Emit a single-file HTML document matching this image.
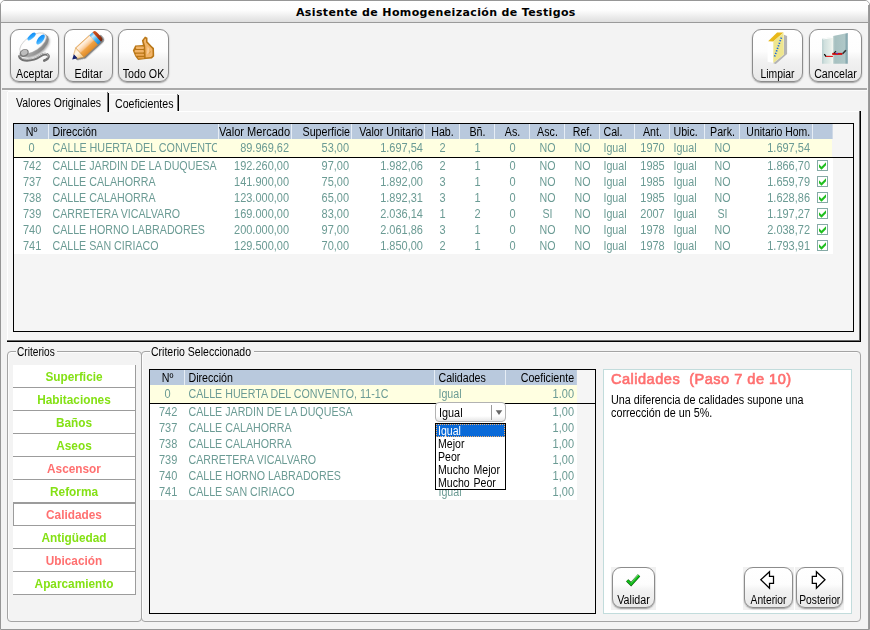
<!DOCTYPE html>
<html lang="es"><head><meta charset="utf-8"><title>Asistente de Homogeneización de Testigos</title>
<style>
html,body{margin:0;padding:0}
body{width:870px;height:630px;position:relative;overflow:hidden;background:#fff;font-family:"Liberation Sans",sans-serif;font-size:12.5px;color:#000}
.a{position:absolute}
.t{position:absolute;white-space:pre;line-height:14px;height:14px;font-size:12.5px;transform:scaleX(.854);transform-origin:0 0}
.tc{transform-origin:50% 0;text-align:center}
.btn{position:absolute;box-sizing:border-box;border:1px solid #8c8c8c;border-radius:9px;background:linear-gradient(#ffffff 0%,#fdfdfd 42%,#f2f2f2 58%,#e8e8e8 100%);box-shadow:0 1px 1.5px rgba(0,0,0,.35)}
.hc{position:absolute;height:15px;background:#b9c9dd;overflow:hidden;white-space:pre;line-height:17px;box-sizing:border-box;transform-origin:0 0}
.c{position:absolute;height:16px;overflow:hidden;white-space:pre;line-height:16px;color:#6b9b94;box-sizing:border-box;transform-origin:0 0}
.crit{position:absolute;left:13px;width:122px;height:22px;background:#fff;border-right:1px solid #9c9c9c;border-bottom:1px solid #9c9c9c}
.crit span{position:absolute;left:0;width:122px;top:5px;line-height:14px;text-align:center;font-weight:bold;transform:scaleX(.945);white-space:pre}
.gr{color:#84e114}.rd{color:#ff7070}
</style></head><body>

<div class="a" style="left:0;top:0;width:868px;height:628px;border:1px solid #969696;border-radius:5px 5px 0 0;background:#f3f3f3"></div>
<div class="a" style="left:1px;top:1px;width:868px;height:21px;border-radius:4px 4px 0 0;background:linear-gradient(#ffffff 0%,#fdfdfd 45%,#dedede 100%)"></div>
<div class="a" style="left:1px;top:22px;width:868px;height:1px;background:#9a9a9a"></div>
<div class="a" style="left:868px;top:5px;width:1px;height:624px;background:#9c9c9c"></div>
<div class="a" style="left:296px;top:6px;white-space:pre;font-family:'DejaVu Sans','Liberation Sans',sans-serif;font-weight:bold;font-size:11px;letter-spacing:0.36px;line-height:14px;height:14px">Asistente de Homogeneización de Testigos</div>
<div class="btn" style="left:10px;top:29px;width:49px;height:53px"></div>
<svg class="a" style="left:10px;top:29px" width="49" height="53" viewBox="0 0 49 53">
<defs>
<radialGradient id="mb" cx="38%" cy="35%" r="80%"><stop offset="0" stop-color="#ffffff"/><stop offset=".7" stop-color="#fbfbfb"/><stop offset="1" stop-color="#d4d4d4"/></radialGradient>
<linearGradient id="ms" x1="0" y1="0" x2="1" y2="1"><stop offset="0" stop-color="#d0d0d0"/><stop offset=".6" stop-color="#9a9a9a"/><stop offset="1" stop-color="#7a7a7a"/></linearGradient>
<linearGradient id="mbl" x1="1" y1="0" x2="0" y2="1"><stop offset="0" stop-color="#0a84f0"/><stop offset=".55" stop-color="#2aa4ff"/><stop offset="1" stop-color="#8ad8ff"/></linearGradient>
<filter id="mf" x="-20%" y="-20%" width="140%" height="140%"><feGaussianBlur stdDeviation="0.8"/></filter>
</defs>
<g filter="url(#mf)" opacity=".6"><ellipse cx="25.8" cy="17.6" rx="15.5" ry="8.4" transform="rotate(-34 25.8 17.6)" fill="#666"/></g>
<path d="M9.4 27.2 C10.5 32 18 31.9 24 30.2 C29 28.8 31.5 25.2 35 25.2 C38.6 25.2 39.6 27.6 37.6 29.6 C36.6 30.6 35.4 31.2 34.3 31.6" fill="none" stroke="#727272" stroke-width="2.7" stroke-linecap="round"/>
<path d="M9.8 26.8 C11.5 31 18 30.8 24 29.2 C29 27.8 31.5 24.3 35 24.3 C38 24.4 38.8 26.6 37.4 28.4" fill="none" stroke="#cfcfcf" stroke-width="1" stroke-linecap="round"/>
<ellipse cx="24.3" cy="16.2" rx="16.2" ry="8.7" transform="rotate(-34 24.3 16.2)" fill="url(#ms)"/>
<ellipse cx="23.1" cy="14.4" rx="15.3" ry="7.5" transform="rotate(-34 23.1 14.4)" fill="url(#mb)" stroke="#a8a8a8" stroke-width=".45"/>
<ellipse cx="21.6" cy="7.5" rx="5.2" ry="2.2" transform="rotate(-43 21.6 7.5)" fill="url(#mbl)"/>
<ellipse cx="30.6" cy="10.5" rx="6" ry="2.7" transform="rotate(-52 30.6 10.5)" fill="url(#mbl)"/>
<ellipse cx="14.2" cy="24" rx="4.8" ry="3.8" transform="rotate(-30 14.2 24)" fill="#7c7c7c"/>
<ellipse cx="14.3" cy="23.6" rx="3.4" ry="2.6" transform="rotate(-30 14.3 23.6)" fill="#bdbdbd"/>
</svg>
<div class="t tc" style="left:10px;width:49px;top:67px;transform:scaleX(0.854);">Aceptar</div>
<div class="btn" style="left:64px;top:29px;width:49px;height:53px"></div>
<svg class="a" style="left:64px;top:29px" width="49" height="53" viewBox="0 0 49 53">
<defs>
<linearGradient id="pb" x1="0" y1="0" x2="0" y2="1"><stop offset="0" stop-color="#f4b46c"/><stop offset=".1" stop-color="#fff2e4"/><stop offset=".3" stop-color="#fde0c0"/><stop offset=".5" stop-color="#f8c48c"/><stop offset=".6" stop-color="#f0a446"/><stop offset="1" stop-color="#e08a26"/></linearGradient>
<linearGradient id="pw" x1="0" y1="0" x2="0" y2="1"><stop offset="0" stop-color="#ffe2b8"/><stop offset=".4" stop-color="#fff6e6"/><stop offset="1" stop-color="#f4c070"/></linearGradient>
<linearGradient id="pbl" x1="0" y1="0" x2="0" y2="1"><stop offset="0" stop-color="#3aa8f0"/><stop offset=".25" stop-color="#c8ecff"/><stop offset=".6" stop-color="#44b4f4"/><stop offset="1" stop-color="#1a88d8"/></linearGradient>
<linearGradient id="pe" x1="0" y1="0" x2="0" y2="1"><stop offset="0" stop-color="#d05820"/><stop offset=".5" stop-color="#b03c14"/><stop offset="1" stop-color="#6c2410"/></linearGradient>
<filter id="pf" x="-20%" y="-40%" width="140%" height="180%"><feGaussianBlur stdDeviation="0.7"/></filter>
</defs>
<g transform="translate(8.2 30.5) rotate(-42.5)">
<path d="M3 3.8 L10.5 8.2 L34 8.2 Q37.8 8.2 37.8 3.4 L37.8 1 L3 1 Z" fill="#505050" opacity=".7" filter="url(#pf)"/>
<path d="M4.4 -2.6 L10.5 -6.3 L10.5 6.3 L4.4 2.6 Z" fill="url(#pw)" stroke="#d89840" stroke-width=".5"/>
<path d="M0 0 L4.8 -2.8 L4.8 2.8 Z" fill="#14226e"/>
<rect x="10.5" y="-6.3" width="18.6" height="12.6" fill="url(#pb)" stroke="#d08a30" stroke-width=".5"/>
<rect x="29.1" y="-6.3" width="4.2" height="12.6" fill="url(#pbl)"/>
<path d="M33.3 -6.3 L34.2 -6.3 Q36.6 -6.3 36.6 -2.8 L36.6 2.8 Q36.6 6.3 34.2 6.3 L33.3 6.3 Z" fill="url(#pe)"/>
</g>
</svg>
<div class="t tc" style="left:64px;width:49px;top:67px;transform:scaleX(0.854);">Editar</div>
<div class="btn" style="left:118px;top:29px;width:51px;height:53px"></div>
<svg class="a" style="left:118px;top:29px" width="51" height="53" viewBox="0 0 51 53">
<path d="M27 7.4 L29.5 8.7 L29.5 12.5 L33.9 17.2 L36 19.1 L36.2 27.2 L33.9 29.6 L28 30.1 L20.1 31 L17.2 27.3 L14.8 21.6 L17.2 16.4 L24.9 15.9 L23.9 11.6 Z" fill="#b87616"/>
<path d="M27 9.4 L28 9.9 L28 13.2 L32.5 18 L34.4 19.9 L34.6 26.4 L33 28 L27.7 28.5 L27.2 17 L25.6 11.9 Z" fill="#f2b468"/>
<path d="M29.6 17.6 L31.2 19.8 L30.8 23.6 L28.8 25.6 Z" fill="#f9cc94"/>
<path d="M31.2 24.2 L32.8 22.6" stroke="#c88a2c" stroke-width=".8"/>
<rect x="17.9" y="17.6" width="8" height="2.3" rx=".9" fill="#f2b468"/>
<rect x="16.6" y="21.1" width="9.3" height="2.4" rx=".9" fill="#f2b468"/>
<rect x="17.6" y="24.7" width="8.4" height="2.1" rx=".9" fill="#eeaa58"/>
<rect x="19.8" y="27.9" width="6.4" height="1.6" rx=".7" fill="#e6a048"/>
</svg>
<div class="t tc" style="left:118px;width:51px;top:67px;transform:scaleX(0.854);">Todo OK</div>
<div class="btn" style="left:752px;top:29px;width:51px;height:53px"></div>
<svg class="a" style="left:752px;top:29px" width="51" height="53" viewBox="0 0 51 53">
<path d="M31.9 5.7 L35.1 7 L35.1 25.1 L23.8 35.1 L21.3 34.2 L31.9 25.6 Z" fill="#b4b4b4"/>
<path d="M15.6 12.5 L21.3 12.5 L21.3 33.7 L15.6 32.8 Z" fill="#ffffff"/>
<path d="M16.1 12.2 L25.1 3.4 L31.5 3.4 L21.3 12.6 Z" fill="#e8b818"/>
<path d="M21.3 12.6 L31.5 3.4 L31.9 25.6 L21.3 33.9 Z" fill="#efe68e"/>
<path d="M29.4 8.6 L22.6 27.6" fill="none" stroke="#1466e2" stroke-width="1.7" stroke-dasharray="1.25 1.45"/>
</svg>
<div class="t tc" style="left:752.4px;width:51px;top:67px;transform:scaleX(0.83);">Limpiar</div>
<div class="btn" style="left:809px;top:29px;width:53px;height:53px"></div>
<svg class="a" style="left:809px;top:29px" width="53" height="53" viewBox="0 0 53 53">
<defs>
<linearGradient id="dl" x1="0" y1="0" x2="1" y2="0"><stop offset="0" stop-color="#b4cccc"/><stop offset=".2" stop-color="#cfdfdd"/><stop offset=".7" stop-color="#e2ece8"/><stop offset="1" stop-color="#f4f7f1"/></linearGradient>
<linearGradient id="dr" x1="0" y1="0" x2="1" y2="0"><stop offset="0" stop-color="#c4d6d4"/><stop offset=".12" stop-color="#a6c0c0"/><stop offset=".82" stop-color="#b0c8c8"/><stop offset=".86" stop-color="#8cacb2"/><stop offset="1" stop-color="#86a8b0"/></linearGradient>
</defs>
<path d="M13.1 9.8 L24.1 7.8 L24.1 34.7 L13.1 34.7 Z" fill="url(#dl)"/>
<path d="M14 10.6 L24.1 8.7 L24.1 7.8 L13.6 9.7 Z" fill="#ffffff"/>
<path d="M24.1 7 L38.8 3.9 L38.8 34.7 L24.1 34.7 Z" fill="url(#dr)"/>
<path d="M16.5 27.4 L23.9 27.4" stroke="#e41414" stroke-width="1.1"/>
<path d="M23.2 24.9 L33.4 24.9" stroke="#d01010" stroke-width="2"/>
<path d="M15.3 25.2 L16.9 27.4" stroke="#000" stroke-width="1.2"/>
<path d="M25 24.2 L27 22.2" stroke="#222" stroke-width="1.2"/>
<path d="M33.6 24.8 L36.9 21.2" stroke="#333" stroke-width="1.6"/>
<rect x="27.2" y="23.9" width="1.6" height="1" fill="#5030e0"/>
</svg>
<div class="t tc" style="left:809px;width:53px;top:67px;transform:scaleX(0.854);">Cancelar</div>
<div class="a" style="left:2px;top:88px;width:865px;height:2px;background:#a9a9a9"></div>
<div class="a" style="left:3px;top:90px;width:864px;height:1px;background:#fbfbfb"></div>
<div class="a" style="left:7px;top:111px;width:852px;height:229px;background:#f5f5f5"></div>
<div class="a" style="left:7px;top:92px;width:100px;height:20px;background:#f5f5f5"></div>
<div class="a" style="left:8px;top:91px;width:99px;height:1px;background:#fff"></div>
<div class="a" style="left:7px;top:92px;width:1px;height:248px;background:#fff"></div>
<div class="a" style="left:109px;top:111px;width:750px;height:1px;background:#fff"></div>
<div class="a" style="left:110px;top:94px;width:67px;height:17px;background:#f6f6f6;border-top:1px solid #fdfdfd"></div>
<div class="a" style="left:859px;top:111px;width:1px;height:230px;background:#6a6a6a"></div>
<div class="a" style="left:7px;top:340px;width:853px;height:1px;background:#6a6a6a"></div>
<div class="a" style="left:860px;top:111px;width:1px;height:231px;background:#000"></div>
<div class="a" style="left:7px;top:341px;width:854px;height:1px;background:#000"></div>
<div class="a" style="left:107px;top:92px;width:1px;height:20px;background:#7a7a7a"></div>
<div class="a" style="left:108px;top:93px;width:1px;height:19px;background:#000"></div>
<div class="a" style="left:177px;top:94px;width:1px;height:17px;background:#7a7a7a"></div>
<div class="a" style="left:178px;top:95px;width:1px;height:16px;background:#000"></div>
<div class="t " style="left:16px;top:96px;transform:scaleX(0.84);">Valores Originales</div>
<div class="t " style="left:115px;top:97px;transform:scaleX(0.85);">Coeficientes</div>
<div class="a" style="left:13px;top:123px;width:839px;height:207px;border:1px solid #000;background:#f5f5f5;box-sizing:content-box"></div>
<div class="hc" style="left:14px;top:124px;width:40.98px;text-align:center;transform:scaleX(0.854);">Nº</div>
<div class="hc" style="left:49px;top:124px;width:199.06px;padding-left:4px;text-align:left;transform:scaleX(0.854);">Dirección</div>
<div class="hc" style="left:219px;top:124px;width:82.49px;padding-right:2.3px;text-align:right;transform:scaleX(0.885);">Valor Mercado</div>
<div class="hc" style="left:292px;top:124px;width:70.26px;padding-right:2.3px;text-align:right;transform:scaleX(0.854);">Superficie</div>
<div class="hc" style="left:352px;top:124px;width:85.48px;padding-right:2.3px;text-align:right;transform:scaleX(0.854);">Valor Unitario</div>
<div class="hc" style="left:425px;top:124px;width:40.98px;text-align:center;transform:scaleX(0.854);">Hab.</div>
<div class="hc" style="left:460px;top:124px;width:40.98px;text-align:center;transform:scaleX(0.854);">Bñ.</div>
<div class="hc" style="left:495px;top:124px;width:40.98px;text-align:center;transform:scaleX(0.854);">As.</div>
<div class="hc" style="left:530px;top:124px;width:40.98px;text-align:center;transform:scaleX(0.854);">Asc.</div>
<div class="hc" style="left:565px;top:124px;width:40.98px;text-align:center;transform:scaleX(0.854);">Ref.</div>
<div class="hc" style="left:600px;top:124px;width:40.98px;padding-left:4px;text-align:left;transform:scaleX(0.854);">Cal.</div>
<div class="hc" style="left:635px;top:124px;width:40.98px;text-align:center;transform:scaleX(0.854);">Ant.</div>
<div class="hc" style="left:670px;top:124px;width:40.98px;padding-left:4px;text-align:left;transform:scaleX(0.854);">Ubic.</div>
<div class="hc" style="left:705px;top:124px;width:40.98px;text-align:center;transform:scaleX(0.854);">Park.</div>
<div class="hc" style="left:740px;top:124px;width:87.43px;padding-right:3.4px;text-align:right;transform:scaleX(0.835);">Unitario Hom.</div>
<div class="hc" style="left:813px;top:124px;width:23.42px;text-align:center;transform:scaleX(0.854);"></div>
<div class="a" style="left:48px;top:124px;width:1px;height:15px;background:#e6edf5"></div>
<div class="a" style="left:218px;top:124px;width:1px;height:15px;background:#e6edf5"></div>
<div class="a" style="left:291px;top:124px;width:1px;height:15px;background:#e6edf5"></div>
<div class="a" style="left:351px;top:124px;width:1px;height:15px;background:#e6edf5"></div>
<div class="a" style="left:424px;top:124px;width:1px;height:15px;background:#e6edf5"></div>
<div class="a" style="left:459px;top:124px;width:1px;height:15px;background:#e6edf5"></div>
<div class="a" style="left:494px;top:124px;width:1px;height:15px;background:#e6edf5"></div>
<div class="a" style="left:529px;top:124px;width:1px;height:15px;background:#e6edf5"></div>
<div class="a" style="left:564px;top:124px;width:1px;height:15px;background:#e6edf5"></div>
<div class="a" style="left:599px;top:124px;width:1px;height:15px;background:#e6edf5"></div>
<div class="a" style="left:634px;top:124px;width:1px;height:15px;background:#e6edf5"></div>
<div class="a" style="left:669px;top:124px;width:1px;height:15px;background:#e6edf5"></div>
<div class="a" style="left:704px;top:124px;width:1px;height:15px;background:#e6edf5"></div>
<div class="a" style="left:739px;top:124px;width:1px;height:15px;background:#e6edf5"></div>
<div class="a" style="left:812px;top:124px;width:1px;height:15px;background:#e6edf5"></div>
<div class="a" style="left:14px;top:139px;width:818px;height:18px;background:#ffffe1"></div>
<div class="a" style="left:14px;top:157px;width:839px;height:1px;background:#000"></div>
<div class="a" style="left:14px;top:158px;width:819px;height:96px;background:#fff"></div>
<div class="c" style="left:14px;top:140px;width:39.82px;text-align:center;transform:scaleX(0.879);">0</div>
<div class="c" style="left:49px;top:140px;width:194.90px;padding-left:4px;text-align:left;transform:scaleX(0.862);">CALLE HUERTA DEL CONVENTO, 11-1C</div>
<div class="c" style="left:219px;top:140px;width:83.05px;padding-right:3.4px;text-align:right;transform:scaleX(0.879);">89.969,62</div>
<div class="c" style="left:292px;top:140px;width:68.26px;padding-right:3.4px;text-align:right;transform:scaleX(0.879);">53,00</div>
<div class="c" style="left:352px;top:140px;width:83.05px;padding-right:2.3px;text-align:right;transform:scaleX(0.879);">1.697,54</div>
<div class="c" style="left:425px;top:140px;width:39.82px;text-align:center;transform:scaleX(0.879);">2</div>
<div class="c" style="left:460px;top:140px;width:39.82px;text-align:center;transform:scaleX(0.879);">1</div>
<div class="c" style="left:495px;top:140px;width:39.82px;text-align:center;transform:scaleX(0.879);">0</div>
<div class="c" style="left:530px;top:140px;width:40.98px;text-align:center;transform:scaleX(0.854);">NO</div>
<div class="c" style="left:565px;top:140px;width:40.98px;text-align:center;transform:scaleX(0.854);">NO</div>
<div class="c" style="left:600px;top:140px;width:40.98px;padding-left:4px;text-align:left;transform:scaleX(0.854);">Igual</div>
<div class="c" style="left:635px;top:140px;width:39.82px;text-align:center;transform:scaleX(0.879);">1970</div>
<div class="c" style="left:670px;top:140px;width:40.98px;padding-left:4px;text-align:left;transform:scaleX(0.854);">Igual</div>
<div class="c" style="left:705px;top:140px;width:40.98px;text-align:center;transform:scaleX(0.854);">NO</div>
<div class="c" style="left:740px;top:140px;width:83.05px;padding-right:3.4px;text-align:right;transform:scaleX(0.879);">1.697,54</div>
<div class="c" style="left:14px;top:158px;width:39.82px;text-align:center;transform:scaleX(0.879);padding-left:1.4px;">742</div>
<div class="c" style="left:49px;top:158px;width:196.72px;padding-left:4px;text-align:left;transform:scaleX(0.854);">CALLE JARDIN DE LA DUQUESA</div>
<div class="c" style="left:219px;top:158px;width:83.05px;padding-right:3.4px;text-align:right;transform:scaleX(0.879);">192.260,00</div>
<div class="c" style="left:292px;top:158px;width:68.26px;padding-right:3.4px;text-align:right;transform:scaleX(0.879);">97,00</div>
<div class="c" style="left:352px;top:158px;width:83.05px;padding-right:2.3px;text-align:right;transform:scaleX(0.879);">1.982,06</div>
<div class="c" style="left:425px;top:158px;width:39.82px;text-align:center;transform:scaleX(0.879);">2</div>
<div class="c" style="left:460px;top:158px;width:39.82px;text-align:center;transform:scaleX(0.879);">1</div>
<div class="c" style="left:495px;top:158px;width:39.82px;text-align:center;transform:scaleX(0.879);">0</div>
<div class="c" style="left:530px;top:158px;width:40.98px;text-align:center;transform:scaleX(0.854);">NO</div>
<div class="c" style="left:565px;top:158px;width:40.98px;text-align:center;transform:scaleX(0.854);">NO</div>
<div class="c" style="left:600px;top:158px;width:40.98px;padding-left:4px;text-align:left;transform:scaleX(0.854);">Igual</div>
<div class="c" style="left:635px;top:158px;width:39.82px;text-align:center;transform:scaleX(0.879);">1985</div>
<div class="c" style="left:670px;top:158px;width:40.98px;padding-left:4px;text-align:left;transform:scaleX(0.854);">Igual</div>
<div class="c" style="left:705px;top:158px;width:40.98px;text-align:center;transform:scaleX(0.854);">NO</div>
<div class="c" style="left:740px;top:158px;width:83.05px;padding-right:3.4px;text-align:right;transform:scaleX(0.879);">1.866,70</div>
<svg class="a" style="left:817px;top:160px" width="11" height="11" viewBox="0 0 11 11"><rect x="0.5" y="0.5" width="10" height="10" fill="#fff" stroke="#86aaa6"/><path d="M2 4.2 L4.5 6.7 L9 2.2 L9 5.2 L4.5 9.7 L2 7.2 Z" fill="#1fbf1f"/></svg>
<div class="c" style="left:14px;top:174px;width:39.82px;text-align:center;transform:scaleX(0.879);padding-left:1.4px;">737</div>
<div class="c" style="left:49px;top:174px;width:196.72px;padding-left:4px;text-align:left;transform:scaleX(0.854);">CALLE CALAHORRA</div>
<div class="c" style="left:219px;top:174px;width:83.05px;padding-right:3.4px;text-align:right;transform:scaleX(0.879);">141.900,00</div>
<div class="c" style="left:292px;top:174px;width:68.26px;padding-right:3.4px;text-align:right;transform:scaleX(0.879);">75,00</div>
<div class="c" style="left:352px;top:174px;width:83.05px;padding-right:2.3px;text-align:right;transform:scaleX(0.879);">1.892,00</div>
<div class="c" style="left:425px;top:174px;width:39.82px;text-align:center;transform:scaleX(0.879);">3</div>
<div class="c" style="left:460px;top:174px;width:39.82px;text-align:center;transform:scaleX(0.879);">1</div>
<div class="c" style="left:495px;top:174px;width:39.82px;text-align:center;transform:scaleX(0.879);">0</div>
<div class="c" style="left:530px;top:174px;width:40.98px;text-align:center;transform:scaleX(0.854);">NO</div>
<div class="c" style="left:565px;top:174px;width:40.98px;text-align:center;transform:scaleX(0.854);">NO</div>
<div class="c" style="left:600px;top:174px;width:40.98px;padding-left:4px;text-align:left;transform:scaleX(0.854);">Igual</div>
<div class="c" style="left:635px;top:174px;width:39.82px;text-align:center;transform:scaleX(0.879);">1985</div>
<div class="c" style="left:670px;top:174px;width:40.98px;padding-left:4px;text-align:left;transform:scaleX(0.854);">Igual</div>
<div class="c" style="left:705px;top:174px;width:40.98px;text-align:center;transform:scaleX(0.854);">NO</div>
<div class="c" style="left:740px;top:174px;width:83.05px;padding-right:3.4px;text-align:right;transform:scaleX(0.879);">1.659,79</div>
<svg class="a" style="left:817px;top:176px" width="11" height="11" viewBox="0 0 11 11"><rect x="0.5" y="0.5" width="10" height="10" fill="#fff" stroke="#86aaa6"/><path d="M2 4.2 L4.5 6.7 L9 2.2 L9 5.2 L4.5 9.7 L2 7.2 Z" fill="#1fbf1f"/></svg>
<div class="c" style="left:14px;top:190px;width:39.82px;text-align:center;transform:scaleX(0.879);padding-left:1.4px;">738</div>
<div class="c" style="left:49px;top:190px;width:196.72px;padding-left:4px;text-align:left;transform:scaleX(0.854);">CALLE CALAHORRA</div>
<div class="c" style="left:219px;top:190px;width:83.05px;padding-right:3.4px;text-align:right;transform:scaleX(0.879);">123.000,00</div>
<div class="c" style="left:292px;top:190px;width:68.26px;padding-right:3.4px;text-align:right;transform:scaleX(0.879);">65,00</div>
<div class="c" style="left:352px;top:190px;width:83.05px;padding-right:2.3px;text-align:right;transform:scaleX(0.879);">1.892,31</div>
<div class="c" style="left:425px;top:190px;width:39.82px;text-align:center;transform:scaleX(0.879);">3</div>
<div class="c" style="left:460px;top:190px;width:39.82px;text-align:center;transform:scaleX(0.879);">1</div>
<div class="c" style="left:495px;top:190px;width:39.82px;text-align:center;transform:scaleX(0.879);">0</div>
<div class="c" style="left:530px;top:190px;width:40.98px;text-align:center;transform:scaleX(0.854);">NO</div>
<div class="c" style="left:565px;top:190px;width:40.98px;text-align:center;transform:scaleX(0.854);">NO</div>
<div class="c" style="left:600px;top:190px;width:40.98px;padding-left:4px;text-align:left;transform:scaleX(0.854);">Igual</div>
<div class="c" style="left:635px;top:190px;width:39.82px;text-align:center;transform:scaleX(0.879);">1985</div>
<div class="c" style="left:670px;top:190px;width:40.98px;padding-left:4px;text-align:left;transform:scaleX(0.854);">Igual</div>
<div class="c" style="left:705px;top:190px;width:40.98px;text-align:center;transform:scaleX(0.854);">NO</div>
<div class="c" style="left:740px;top:190px;width:83.05px;padding-right:3.4px;text-align:right;transform:scaleX(0.879);">1.628,86</div>
<svg class="a" style="left:817px;top:192px" width="11" height="11" viewBox="0 0 11 11"><rect x="0.5" y="0.5" width="10" height="10" fill="#fff" stroke="#86aaa6"/><path d="M2 4.2 L4.5 6.7 L9 2.2 L9 5.2 L4.5 9.7 L2 7.2 Z" fill="#1fbf1f"/></svg>
<div class="c" style="left:14px;top:206px;width:39.82px;text-align:center;transform:scaleX(0.879);padding-left:1.4px;">739</div>
<div class="c" style="left:49px;top:206px;width:196.72px;padding-left:4px;text-align:left;transform:scaleX(0.854);">CARRETERA VICALVARO</div>
<div class="c" style="left:219px;top:206px;width:83.05px;padding-right:3.4px;text-align:right;transform:scaleX(0.879);">169.000,00</div>
<div class="c" style="left:292px;top:206px;width:68.26px;padding-right:3.4px;text-align:right;transform:scaleX(0.879);">83,00</div>
<div class="c" style="left:352px;top:206px;width:83.05px;padding-right:2.3px;text-align:right;transform:scaleX(0.879);">2.036,14</div>
<div class="c" style="left:425px;top:206px;width:39.82px;text-align:center;transform:scaleX(0.879);">1</div>
<div class="c" style="left:460px;top:206px;width:39.82px;text-align:center;transform:scaleX(0.879);">2</div>
<div class="c" style="left:495px;top:206px;width:39.82px;text-align:center;transform:scaleX(0.879);">0</div>
<div class="c" style="left:530px;top:206px;width:40.98px;text-align:center;transform:scaleX(0.854);">SI</div>
<div class="c" style="left:565px;top:206px;width:40.98px;text-align:center;transform:scaleX(0.854);">NO</div>
<div class="c" style="left:600px;top:206px;width:40.98px;padding-left:4px;text-align:left;transform:scaleX(0.854);">Igual</div>
<div class="c" style="left:635px;top:206px;width:39.82px;text-align:center;transform:scaleX(0.879);">2007</div>
<div class="c" style="left:670px;top:206px;width:40.98px;padding-left:4px;text-align:left;transform:scaleX(0.854);">Igual</div>
<div class="c" style="left:705px;top:206px;width:40.98px;text-align:center;transform:scaleX(0.854);">SI</div>
<div class="c" style="left:740px;top:206px;width:83.05px;padding-right:3.4px;text-align:right;transform:scaleX(0.879);">1.197,27</div>
<svg class="a" style="left:817px;top:208px" width="11" height="11" viewBox="0 0 11 11"><rect x="0.5" y="0.5" width="10" height="10" fill="#fff" stroke="#86aaa6"/><path d="M2 4.2 L4.5 6.7 L9 2.2 L9 5.2 L4.5 9.7 L2 7.2 Z" fill="#1fbf1f"/></svg>
<div class="c" style="left:14px;top:222px;width:39.82px;text-align:center;transform:scaleX(0.879);padding-left:1.4px;">740</div>
<div class="c" style="left:49px;top:222px;width:196.72px;padding-left:4px;text-align:left;transform:scaleX(0.854);">CALLE HORNO LABRADORES</div>
<div class="c" style="left:219px;top:222px;width:83.05px;padding-right:3.4px;text-align:right;transform:scaleX(0.879);">200.000,00</div>
<div class="c" style="left:292px;top:222px;width:68.26px;padding-right:3.4px;text-align:right;transform:scaleX(0.879);">97,00</div>
<div class="c" style="left:352px;top:222px;width:83.05px;padding-right:2.3px;text-align:right;transform:scaleX(0.879);">2.061,86</div>
<div class="c" style="left:425px;top:222px;width:39.82px;text-align:center;transform:scaleX(0.879);">3</div>
<div class="c" style="left:460px;top:222px;width:39.82px;text-align:center;transform:scaleX(0.879);">1</div>
<div class="c" style="left:495px;top:222px;width:39.82px;text-align:center;transform:scaleX(0.879);">0</div>
<div class="c" style="left:530px;top:222px;width:40.98px;text-align:center;transform:scaleX(0.854);">NO</div>
<div class="c" style="left:565px;top:222px;width:40.98px;text-align:center;transform:scaleX(0.854);">NO</div>
<div class="c" style="left:600px;top:222px;width:40.98px;padding-left:4px;text-align:left;transform:scaleX(0.854);">Igual</div>
<div class="c" style="left:635px;top:222px;width:39.82px;text-align:center;transform:scaleX(0.879);">1978</div>
<div class="c" style="left:670px;top:222px;width:40.98px;padding-left:4px;text-align:left;transform:scaleX(0.854);">Igual</div>
<div class="c" style="left:705px;top:222px;width:40.98px;text-align:center;transform:scaleX(0.854);">NO</div>
<div class="c" style="left:740px;top:222px;width:83.05px;padding-right:3.4px;text-align:right;transform:scaleX(0.879);">2.038,72</div>
<svg class="a" style="left:817px;top:224px" width="11" height="11" viewBox="0 0 11 11"><rect x="0.5" y="0.5" width="10" height="10" fill="#fff" stroke="#86aaa6"/><path d="M2 4.2 L4.5 6.7 L9 2.2 L9 5.2 L4.5 9.7 L2 7.2 Z" fill="#1fbf1f"/></svg>
<div class="c" style="left:14px;top:238px;width:39.82px;text-align:center;transform:scaleX(0.879);padding-left:1.4px;">741</div>
<div class="c" style="left:49px;top:238px;width:196.72px;padding-left:4px;text-align:left;transform:scaleX(0.854);">CALLE SAN CIRIACO</div>
<div class="c" style="left:219px;top:238px;width:83.05px;padding-right:3.4px;text-align:right;transform:scaleX(0.879);">129.500,00</div>
<div class="c" style="left:292px;top:238px;width:68.26px;padding-right:3.4px;text-align:right;transform:scaleX(0.879);">70,00</div>
<div class="c" style="left:352px;top:238px;width:83.05px;padding-right:2.3px;text-align:right;transform:scaleX(0.879);">1.850,00</div>
<div class="c" style="left:425px;top:238px;width:39.82px;text-align:center;transform:scaleX(0.879);">2</div>
<div class="c" style="left:460px;top:238px;width:39.82px;text-align:center;transform:scaleX(0.879);">1</div>
<div class="c" style="left:495px;top:238px;width:39.82px;text-align:center;transform:scaleX(0.879);">0</div>
<div class="c" style="left:530px;top:238px;width:40.98px;text-align:center;transform:scaleX(0.854);">NO</div>
<div class="c" style="left:565px;top:238px;width:40.98px;text-align:center;transform:scaleX(0.854);">NO</div>
<div class="c" style="left:600px;top:238px;width:40.98px;padding-left:4px;text-align:left;transform:scaleX(0.854);">Igual</div>
<div class="c" style="left:635px;top:238px;width:39.82px;text-align:center;transform:scaleX(0.879);">1978</div>
<div class="c" style="left:670px;top:238px;width:40.98px;padding-left:4px;text-align:left;transform:scaleX(0.854);">Igual</div>
<div class="c" style="left:705px;top:238px;width:40.98px;text-align:center;transform:scaleX(0.854);">NO</div>
<div class="c" style="left:740px;top:238px;width:83.05px;padding-right:3.4px;text-align:right;transform:scaleX(0.879);">1.793,91</div>
<svg class="a" style="left:817px;top:240px" width="11" height="11" viewBox="0 0 11 11"><rect x="0.5" y="0.5" width="10" height="10" fill="#fff" stroke="#86aaa6"/><path d="M2 4.2 L4.5 6.7 L9 2.2 L9 5.2 L4.5 9.7 L2 7.2 Z" fill="#1fbf1f"/></svg>
<div class="a" style="left:7px;top:351px;width:133px;height:269px;border:1px solid #a4a4a4;border-radius:4px;box-shadow:inset 1px 1px 0 rgba(255,255,255,.7)"></div>
<div class="a" style="left:16px;top:350px;width:41px;height:4px;background:#f3f3f3"></div>
<div class="t " style="left:17.2px;top:345px;transform:scaleX(0.81);">Criterios</div>
<div class="a" style="left:141px;top:351px;width:718px;height:269px;border:1px solid #a4a4a4;border-radius:4px;box-shadow:inset 1px 1px 0 rgba(255,255,255,.7)"></div>
<div class="a" style="left:150px;top:350px;width:104px;height:4px;background:#f3f3f3"></div>
<div class="t " style="left:151.2px;top:345px;transform:scaleX(0.842);">Criterio Seleccionado</div>
<div class="crit gr" style="top:365px"><span>Superficie</span></div>
<div class="crit gr" style="top:388px"><span>Habitaciones</span></div>
<div class="crit gr" style="top:411px"><span>Baños</span></div>
<div class="crit gr" style="top:434px"><span>Aseos</span></div>
<div class="crit rd" style="top:457px"><span>Ascensor</span></div>
<div class="crit gr" style="top:480px"><span>Reforma</span></div>
<div class="crit rd" style="top:503px;box-shadow:inset 1px 1px 0 #9c9c9c"><span>Calidades</span></div>
<div class="crit gr" style="top:526px"><span>Antigüedad</span></div>
<div class="crit rd" style="top:549px"><span>Ubicación</span></div>
<div class="crit gr" style="top:572px"><span>Aparcamiento</span></div>
<div class="a" style="left:149px;top:369px;width:445px;height:243px;border:1px solid #000;background:#f5f5f5"></div>
<div class="hc" style="left:150px;top:370px;width:40.98px;text-align:center;transform:scaleX(0.854);">Nº</div>
<div class="hc" style="left:185px;top:370px;width:292.74px;padding-left:4px;text-align:left;transform:scaleX(0.854);">Dirección</div>
<div class="hc" style="left:435px;top:370px;width:83.14px;padding-left:4px;text-align:left;transform:scaleX(0.854);">Calidades</div>
<div class="hc" style="left:506px;top:370px;width:83.14px;padding-right:3.4px;text-align:right;transform:scaleX(0.854);">Coeficiente</div>
<div class="a" style="left:184px;top:370px;width:1px;height:15px;background:#e6edf5"></div>
<div class="a" style="left:434px;top:370px;width:1px;height:15px;background:#e6edf5"></div>
<div class="a" style="left:505px;top:370px;width:1px;height:15px;background:#e6edf5"></div>
<div class="a" style="left:150px;top:385px;width:427px;height:18px;background:#ffffe1"></div>
<div class="a" style="left:150px;top:403px;width:445px;height:1px;background:#000"></div>
<div class="a" style="left:150px;top:404px;width:427px;height:96px;background:#fff"></div>
<div class="c" style="left:150px;top:386px;width:39.82px;text-align:center;transform:scaleX(0.879);">0</div>
<div class="c" style="left:185px;top:386px;width:292.74px;padding-left:4px;text-align:left;transform:scaleX(0.854);">CALLE HUERTA DEL CONVENTO, 11-1C</div>
<div class="c" style="left:435px;top:386px;width:83.14px;padding-left:4px;text-align:left;transform:scaleX(0.854);">Igual</div>
<div class="c" style="left:506px;top:386px;width:80.77px;padding-right:3.4px;text-align:right;transform:scaleX(0.879);">1.00</div>
<div class="c" style="left:150px;top:404px;width:39.82px;text-align:center;transform:scaleX(0.879);padding-left:1.4px;">742</div>
<div class="c" style="left:185px;top:404px;width:292.74px;padding-left:4px;text-align:left;transform:scaleX(0.854);">CALLE JARDIN DE LA DUQUESA</div>
<div class="c" style="left:435px;top:404px;width:83.14px;padding-left:4px;text-align:left;transform:scaleX(0.854);">Igual</div>
<div class="c" style="left:506px;top:404px;width:80.77px;padding-right:3.4px;text-align:right;transform:scaleX(0.879);">1,00</div>
<div class="c" style="left:150px;top:420px;width:39.82px;text-align:center;transform:scaleX(0.879);padding-left:1.4px;">737</div>
<div class="c" style="left:185px;top:420px;width:292.74px;padding-left:4px;text-align:left;transform:scaleX(0.854);">CALLE CALAHORRA</div>
<div class="c" style="left:435px;top:420px;width:83.14px;padding-left:4px;text-align:left;transform:scaleX(0.854);">Igual</div>
<div class="c" style="left:506px;top:420px;width:80.77px;padding-right:3.4px;text-align:right;transform:scaleX(0.879);">1,00</div>
<div class="c" style="left:150px;top:436px;width:39.82px;text-align:center;transform:scaleX(0.879);padding-left:1.4px;">738</div>
<div class="c" style="left:185px;top:436px;width:292.74px;padding-left:4px;text-align:left;transform:scaleX(0.854);">CALLE CALAHORRA</div>
<div class="c" style="left:435px;top:436px;width:83.14px;padding-left:4px;text-align:left;transform:scaleX(0.854);">Igual</div>
<div class="c" style="left:506px;top:436px;width:80.77px;padding-right:3.4px;text-align:right;transform:scaleX(0.879);">1,00</div>
<div class="c" style="left:150px;top:452px;width:39.82px;text-align:center;transform:scaleX(0.879);padding-left:1.4px;">739</div>
<div class="c" style="left:185px;top:452px;width:292.74px;padding-left:4px;text-align:left;transform:scaleX(0.854);">CARRETERA VICALVARO</div>
<div class="c" style="left:435px;top:452px;width:83.14px;padding-left:4px;text-align:left;transform:scaleX(0.854);">Igual</div>
<div class="c" style="left:506px;top:452px;width:80.77px;padding-right:3.4px;text-align:right;transform:scaleX(0.879);">1,00</div>
<div class="c" style="left:150px;top:468px;width:39.82px;text-align:center;transform:scaleX(0.879);padding-left:1.4px;">740</div>
<div class="c" style="left:185px;top:468px;width:292.74px;padding-left:4px;text-align:left;transform:scaleX(0.854);">CALLE HORNO LABRADORES</div>
<div class="c" style="left:435px;top:468px;width:83.14px;padding-left:4px;text-align:left;transform:scaleX(0.854);">Igual</div>
<div class="c" style="left:506px;top:468px;width:80.77px;padding-right:3.4px;text-align:right;transform:scaleX(0.879);">1,00</div>
<div class="c" style="left:150px;top:484px;width:39.82px;text-align:center;transform:scaleX(0.879);padding-left:1.4px;">741</div>
<div class="c" style="left:185px;top:484px;width:292.74px;padding-left:4px;text-align:left;transform:scaleX(0.854);">CALLE SAN CIRIACO</div>
<div class="c" style="left:435px;top:484px;width:83.14px;padding-left:4px;text-align:left;transform:scaleX(0.854);">Igual</div>
<div class="c" style="left:506px;top:484px;width:80.77px;padding-right:3.4px;text-align:right;transform:scaleX(0.879);">1,00</div>
<div class="a" style="left:435px;top:402px;width:71px;height:20px;box-sizing:border-box;border:1px solid #b2b2b2;border-radius:4px;background:linear-gradient(#fff 0%,#fff 72%,#e6e6e6 100%)"></div>
<div class="t " style="left:438.8px;top:406px;transform:scaleX(0.87);">Igual</div>
<div class="a" style="left:491px;top:405px;width:1px;height:15px;background:#9a9a9a"></div>
<svg class="a" style="left:495px;top:410px" width="8" height="6" viewBox="0 0 8 6"><path d="M0.7 0.2 L7.3 0.2 L4 5 Z" fill="#686868"/></svg>
<div class="a" style="left:435px;top:423px;width:71px;height:67px;box-sizing:border-box;border:1px solid #000;background:#fff"></div>
<div class="a" style="left:436px;top:424px;width:69px;height:13px;background:#0a6ad8;box-sizing:border-box;border:1px dotted #f0b070"></div>
<div class="t " style="left:437.8px;top:424px;transform:scaleX(0.845);color:#fff;word-spacing:1px">Igual</div>
<div class="t " style="left:437.8px;top:437px;transform:scaleX(0.845);color:#000;word-spacing:1px">Mejor</div>
<div class="t " style="left:437.8px;top:450px;transform:scaleX(0.845);color:#000;word-spacing:1px">Peor</div>
<div class="t " style="left:437.8px;top:463px;transform:scaleX(0.845);color:#000;word-spacing:1px">Mucho Mejor</div>
<div class="t " style="left:437.8px;top:476px;transform:scaleX(0.845);color:#000;word-spacing:1px">Mucho Peor</div>
<div class="a" style="left:603px;top:369px;width:249px;height:245px;box-sizing:border-box;border:1px solid #c2dcdc;background:#fff"></div>
<div class="a rd" style="left:611px;top:371px;white-space:pre;font-weight:normal;-webkit-text-stroke:0.6px #ff7070;font-size:14px;letter-spacing:.45px;line-height:17px;height:17px;transform:scaleX(1.043);transform-origin:0 0">Calidades  (Paso 7 de 10)</div>
<div class="t " style="left:611px;top:393px;transform:scaleX(0.863);">Una diferencia de calidades supone una</div>
<div class="t " style="left:611px;top:406px;transform:scaleX(0.863);">corrección de un 5%.</div>
<div class="a" style="left:611px;top:567px;width:45px;height:43px;background:#f1f1f1"></div>
<div class="btn" style="left:612px;top:567px;width:43px;height:41px"></div>
<svg class="a" style="left:612px;top:567px" width="43" height="41" viewBox="0 0 43 41">
<path d="M15.2 13.3 L19.1 17.2 L27 8.3" fill="none" stroke="#0b5e0b" stroke-width="3.3" stroke-linejoin="miter"/>
<path d="M15.2 13.3 L19.1 17.2 L27 8.3" fill="none" stroke="#12c41a" stroke-width="1.9"/>
<path d="M19.2 15.6 L26.3 7.6" fill="none" stroke="#a8f4a8" stroke-width=".7"/>
</svg>
<div class="t tc" style="left:612px;width:43px;top:593px;transform:scaleX(0.854);">Validar</div>
<div class="a" style="left:743px;top:567px;width:51px;height:43px;background:#f1f1f1"></div>
<div class="btn" style="left:744px;top:567px;width:49px;height:41px"></div>
<svg class="a" style="left:744px;top:567px" width="49" height="41" viewBox="0 0 49 41">
<path d="M16.8 12.7 L25.5 4.7 L25.5 9.3 L29.5 9.3 L29.5 16.4 L25.5 16.4 L25.5 21.3 Z" fill="#fff" stroke="#000" stroke-width="1.25" stroke-linejoin="miter"/>
</svg>
<div class="t tc" style="left:744px;width:49px;top:593px;transform:scaleX(0.82);">Anterior</div>
<div class="a" style="left:795px;top:567px;width:49px;height:43px;background:#f1f1f1"></div>
<div class="btn" style="left:796px;top:567px;width:47px;height:41px"></div>
<svg class="a" style="left:796px;top:567px" width="47" height="41" viewBox="0 0 47 41">
<path d="M29 12.7 L20.4 4.7 L20.4 9.3 L16.3 9.3 L16.3 16.4 L20.4 16.4 L20.4 21.3 Z" fill="#fff" stroke="#000" stroke-width="1.25" stroke-linejoin="miter"/>
</svg>
<div class="t tc" style="left:795.2px;width:47px;top:593px;transform:scaleX(0.82);">Posterior</div>
</body></html>
